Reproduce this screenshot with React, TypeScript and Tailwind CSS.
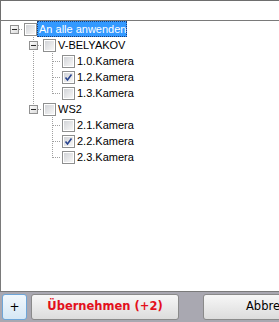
import React from "react";

type Cell = "blank" | "pipe" | "tee" | "end" | "head";

const rows: {
  cells: Cell[];
  expander?: boolean;
  label: string;
  checked?: boolean;
  selected?: boolean;
}[] = [
  { cells: ["head"], expander: true, label: "An alle anwenden", selected: true },
  { cells: ["blank", "tee"], expander: true, label: "V-BELYAKOV" },
  { cells: ["blank", "pipe", "tee"], label: "1.0.Kamera" },
  { cells: ["blank", "pipe", "tee"], label: "1.2.Kamera", checked: true },
  { cells: ["blank", "pipe", "end"], label: "1.3.Kamera" },
  { cells: ["blank", "end"], expander: true, label: "WS2" },
  { cells: ["blank", "blank", "tee"], label: "2.1.Kamera" },
  { cells: ["blank", "blank", "tee"], label: "2.2.Kamera", checked: true },
  { cells: ["blank", "blank", "end"], label: "2.3.Kamera" },
];

const LineCell = ({ type, expander }: { type: Cell; expander: boolean }) => {
  const dot = { stroke: "#a0a0a0", strokeWidth: 1, strokeDasharray: "1 1" };
  return (
    <svg width="19" height="16" viewBox="0 0 19 16" className="shrink-0 block">
      {(type === "pipe" || type === "tee") && <path d="M10.5 0V16" {...dot} />}
      {type === "end" && <path d="M10.5 0V9" {...dot} />}
      {(type === "tee" || type === "end" || type === "head") && (
        <path d="M11 8.5H19" {...dot} />
      )}
      {expander && (
        <g>
          <defs>
            <linearGradient id="exp" x1="0" y1="0" x2="1" y2="1">
              <stop offset="0" stopColor="#ffffff" />
              <stop offset="1" stopColor="#d8d8d8" />
            </linearGradient>
          </defs>
          <rect x="6.5" y="4.5" width="8" height="8" fill="url(#exp)" stroke="#919191" />
          <path d="M8 8.5H13" stroke="#2a2a2a" strokeWidth="1" />
        </g>
      )}
    </svg>
  );
};

const CheckBox = ({ checked }: { checked?: boolean }) => (
  <div className="ml-px w-[13px] h-[13px] shrink-0 border border-[#8e8f8f] bg-white p-px">
    <div className="relative w-full h-full bg-gradient-to-br from-[#d2d4d8] to-[#f7f7f7]">
      {checked && (
        <svg width="11" height="11" viewBox="0 0 11 11" className="absolute -left-px -top-px">
          <path
            d="M2.5 5.5L4.5 8L8.5 2.5"
            fill="none"
            stroke="#29448f"
            strokeWidth="1.6"
          />
        </svg>
      )}
    </div>
  </div>
);

export default function App() {
  return (
    <div className="w-[279px] h-[322px] overflow-hidden flex flex-col bg-white font-['Liberation_Sans',sans-serif]">
      <div className="h-[20px] shrink-0 border-t border-l border-[#6e6e6e] bg-white" />

      <div className="flex-1 border border-r-0 border-[#7a7a7a] bg-white pl-[3px]">
        {rows.map((row, i) => (
          <div key={i} className="flex items-center h-4">
            {row.cells.map((c, j) => (
              <LineCell
                key={j}
                type={c}
                expander={!!row.expander && j === row.cells.length - 1}
              />
            ))}
            <CheckBox checked={row.checked} />
            <span
              className={`h-4 leading-4 text-[11px] whitespace-nowrap pl-[2px] pr-px ${
                row.selected
                  ? "bg-[#3399ff] text-white outline-1 outline-dotted -outline-offset-1 outline-[#1b3f7a]"
                  : "text-black"
              }`}
            >
              {row.label}
            </span>
          </div>
        ))}
      </div>

      <div className="h-[30px] shrink-0 bg-[#a9a8b1] flex items-start pt-[2px] pl-[2px] font-['DejaVu_Sans',sans-serif]">
        <button className="w-[25px] h-[26px] shrink-0 rounded-[3px] border border-[#6ea6d8] bg-gradient-to-b from-[#f1f8fd] to-[#d6e8f5] text-[12px] text-black flex items-center justify-center">
          +
        </button>
        <button className="ml-[4px] w-[148px] h-[26px] shrink-0 rounded-[3px] border border-[#8a8a8a] bg-gradient-to-b from-[#f7f7f7] to-[#dcdcdc] text-[11.5px] font-bold text-[#e3101c] flex items-center justify-center">
          Übernehmen (+2)
        </button>
        <button className="ml-[24px] w-[148px] h-[26px] shrink-0 rounded-[3px] border border-[#8a8a8a] bg-gradient-to-b from-[#f7f7f7] to-[#dcdcdc] text-[11.5px] text-black flex items-center justify-center">
          Abbrechen
        </button>
      </div>
    </div>
  );
}
